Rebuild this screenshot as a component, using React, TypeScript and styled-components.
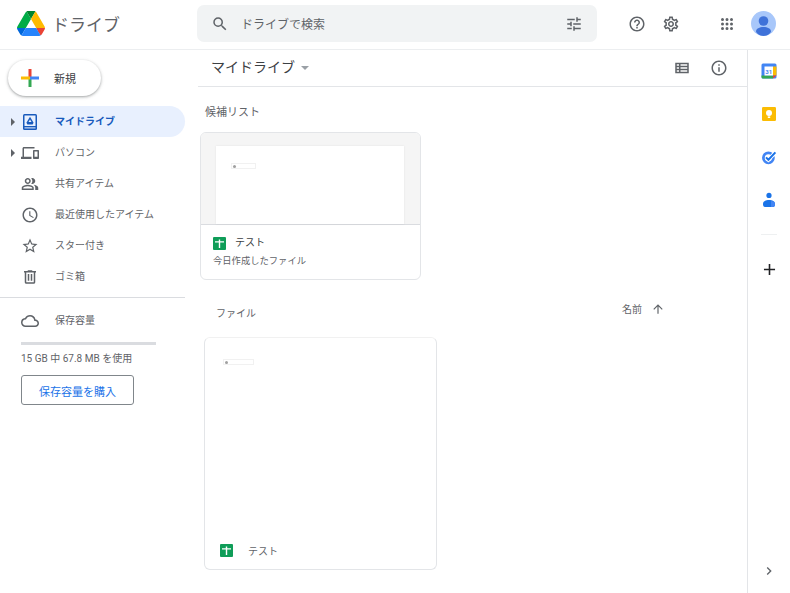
import { createGlobalStyle } from "styled-components";
import styled from "styled-components";

const GlobalStyle = createGlobalStyle`
  html, body { margin: 0; padding: 0; height: 100%; overflow: hidden; background: #fff; }
  body { font-family: Roboto, "Noto Sans CJK JP", sans-serif; color: #5f6368; }
  * { box-sizing: border-box; }
`;

const Page = styled.div`
  width: 790px;
  height: 593px;
  display: flex;
  flex-direction: column;
`;

const Header = styled.header`
  height: 50px;
  flex: none;
  display: flex;
  align-items: center;
  border-bottom: 1px solid #eceef0;
`;

const Brand = styled.div`
  width: 197px;
  flex: none;
  display: flex;
  align-items: center;
  gap: 7px;
  padding: 0 0 2px 17px;
  font-size: 17px;
  color: #5f6368;
`;

const SearchBox = styled.div`
  width: 400px;
  height: 37px;
  margin-bottom: 2px;
  flex: none;
  display: flex;
  align-items: center;
  padding: 0 14px 0 14px;
  background: #f1f3f4;
  border-radius: 7px;
  font-size: 12px;
  color: #5f6368;
`;

const SearchText = styled.span`
  flex: 1;
  margin-left: 12px;
`;

const HeaderActions = styled.div`
  display: flex;
  align-items: center;
  margin-left: 31px;
  margin-bottom: 2px;
`;

const HeaderIcon = styled.div<{ $gap?: number }>`
  width: 18px;
  height: 18px;
  display: flex;
  margin-right: ${(p) => p.$gap ?? 0}px;
`;

const Body = styled.div`
  flex: 1;
  display: flex;
  min-height: 0;
`;

const Sidebar = styled.aside`
  width: 197px;
  flex: none;
`;

const NewButton = styled.div`
  width: 93px;
  height: 36px;
  margin: 10px 0 10px 8px;
  display: flex;
  align-items: center;
  gap: 14px;
  padding-left: 12px;
  background: #fff;
  border-radius: 18px;
  box-shadow: 0 1px 2px rgba(60, 64, 67, 0.3), 0 1px 3px 1px rgba(60, 64, 67, 0.15);
  font-size: 11px;
  color: #3c4043;
`;

const NavRow = styled.div<{ $active?: boolean }>`
  width: 185px;
  height: 31px;
  display: flex;
  align-items: center;
  border-radius: 0 16px 16px 0;
  background: ${(p) => (p.$active ? "#e8f0fe" : "transparent")};
  color: ${(p) => (p.$active ? "#185abc" : "#5f6368")};
  font-size: 10px;
  font-weight: ${(p) => (p.$active ? 700 : 400)};
`;

const NavLabel = styled.span`
  margin-bottom: 2px;
`;

const Caret = styled.div<{ $visible?: boolean }>`
  width: 21px;
  flex: none;
  padding-left: 11px;
  &::before {
    content: "";
    display: ${(p) => (p.$visible ? "block" : "none")};
    width: 0;
    height: 0;
    border-left: 4px solid #5f6368;
    border-top: 4px solid transparent;
    border-bottom: 4px solid transparent;
  }
`;

const NavIcon = styled.div`
  width: 18px;
  height: 18px;
  flex: none;
  display: flex;
  margin-right: 16px;
`;

const Divider = styled.div`
  width: 185px;
  height: 1px;
  margin-top: 5px;
  background: #dadce0;
`;

const StorageRow = styled(NavRow)`
  margin-top: 7px;
`;

const StorageBar = styled.div`
  width: 135px;
  height: 3px;
  margin: 6px 0 0 21px;
  background: #dadce0;
`;

const StorageText = styled.div`
  margin: 7px 0 0 21px;
  font-size: 10px;
  line-height: 14px;
  color: #5f6368;
`;

const BuyButton = styled.div`
  width: 113px;
  height: 30px;
  margin: 9px 0 0 21px;
  padding-top: 1px;
  display: flex;
  align-items: center;
  justify-content: center;
  border: 1px solid #80868b;
  border-radius: 3px;
  font-size: 11px;
  color: #1a73e8;
`;

const Main = styled.main`
  flex: 1;
  min-width: 0;
`;

const Toolbar = styled.div`
  height: 37px;
  display: flex;
  align-items: center;
  margin-left: 1px;
  padding: 0 19px 0 13px;
  border-bottom: 1px solid #e3e5e8;
`;

const Title = styled.div`
  font-size: 14px;
  color: #3c4043;
  flex: 1;
  display: flex;
  align-items: center;
  gap: 6px;
  padding-bottom: 5px;
`;

const TitleCaret = styled.span`
  width: 0;
  height: 0;
  margin-top: 5px;
  border-top: 4px solid #9aa0a6;
  border-left: 4.5px solid transparent;
  border-right: 4.5px solid transparent;
`;

const ToolIcon = styled.div<{ $gap?: number }>`
  width: 18px;
  height: 18px;
  display: flex;
  margin-left: ${(p) => p.$gap ?? 0}px;
`;

const Section = styled.div`
  padding: 18px 0 0 8px;
  font-size: 11px;
  line-height: 16px;
  color: #5f6368;
`;

const SuggestedCard = styled.div`
  width: 221px;
  height: 148px;
  margin: 11px 0 0 3px;
  border: 1px solid #e3e5e8;
  border-radius: 6px;
  overflow: hidden;
`;

const Preview = styled.div`
  height: 92px;
  padding: 13px 16px 0 15px;
  background: #f5f5f5;
  border-bottom: 1px solid #dadce0;
`;

const SheetPage = styled.div`
  height: 78px;
  background: #fff;
  padding: 17px 0 0 15px;
  box-shadow: 0 0 2px rgba(0, 0, 0, 0.08);
`;

const CellMark = styled.div<{ $w: number }>`
  width: ${(p) => p.$w}px;
  height: 6px;
  border: 1px solid #f1f1f1;
  display: flex;
  align-items: center;
  padding-left: 1px;
  &::before {
    content: "";
    width: 3px;
    height: 3px;
    border-radius: 50%;
    background: #a0a0a0;
  }
`;

const CardInfo = styled.div`
  padding: 11px 0 0 12px;
`;

const NameRow = styled.div`
  display: flex;
  align-items: center;
  gap: 9px;
  font-size: 10px;
  line-height: 14px;
  color: #3c4043;
`;

const SheetBadge = styled.div`
  width: 13px;
  height: 13px;
  flex: none;
  display: flex;
  border-radius: 1px;
`;

const CardNote = styled.div`
  margin-top: 4px;
  font-size: 9.3px;
  line-height: 14px;
  color: #5f6368;
`;

const FilesHeader = styled.div`
  height: 57px;
  padding: 24px 0 0 19px;
  display: flex;
  font-size: 10px;
  line-height: 16px;
  color: #5f6368;
`;

const FilesLabel = styled.div`
  width: 406px;
  padding-top: 2px;
`;

const SortName = styled.div`
  display: flex;
  align-items: flex-start;
  gap: 9px;
  margin-top: -2px;
`;

const FileCard = styled.div`
  width: 233px;
  height: 233px;
  margin-left: 7px;
  display: flex;
  flex-direction: column;
  border: 1px solid #e3e5e8;
  border-top-color: #f1f1f1;
  border-radius: 6px;
`;

const FilePreview = styled.div`
  flex: 1;
  padding: 21px 0 0 18px;
`;

const FileName = styled.div`
  height: 38px;
  padding: 0 0 0 15px;
  display: flex;
  align-items: center;
  gap: 15px;
  font-size: 10px;
  color: #5f6368;
`;

const Rail = styled.aside`
  width: 43px;
  flex: none;
  display: flex;
  flex-direction: column;
  align-items: center;
  border-left: 1px solid #e3e5e8;
  padding: 13px 0 14px;
`;

const RailIcon = styled.div<{ $gap: number }>`
  width: 16px;
  height: 16px;
  display: flex;
  justify-content: center;
  align-items: center;
  margin-bottom: ${(p) => p.$gap}px;
`;

const RailDivider = styled.div`
  width: 16px;
  height: 1px;
  background: #eef0f1;
  margin-bottom: 26px;
`;

const RailSpacer = styled.div`
  flex: 1;
`;

const DriveLogo = () => (
  <svg width="28" height="25" viewBox="0 0 87.3 78">
    <path d="m6.6 66.85 3.85 6.65c.8 1.4 1.95 2.5 3.3 3.3l13.75-23.8h-27.5c0 1.55.4 3.1 1.2 4.5z" fill="#0066da" />
    <path d="m43.65 25-13.75-23.8c-1.35.8-2.5 1.9-3.3 3.3l-25.4 44a9.06 9.06 0 0 0 -1.2 4.5h27.5z" fill="#00ac47" />
    <path d="m73.55 76.8c1.35-.8 2.5-1.9 3.3-3.3l1.6-2.75 7.65-13.25c.8-1.4 1.2-2.95 1.2-4.5h-27.502l5.852 11.5z" fill="#ea4335" />
    <path d="m43.65 25 13.75-23.8c-1.35-.8-2.9-1.2-4.5-1.2h-18.5c-1.6 0-3.15.45-4.5 1.2z" fill="#00832d" />
    <path d="m59.8 53h-32.3l-13.75 23.8c1.35.8 2.9 1.2 4.5 1.2h50.8c1.6 0 3.15-.45 4.5-1.2z" fill="#2684fc" />
    <path d="m73.4 26.5-12.7-22c-.8-1.4-1.95-2.5-3.3-3.3l-13.75 23.8 16.15 28h27.45c0-1.55-.4-3.1-1.2-4.5z" fill="#ffba00" />
  </svg>
);

const Glyph = ({ d, size = 18, color = "#5f6368" }: { d: string; size?: number; color?: string }) => (
  <svg width={size} height={size} viewBox="0 0 24 24" fill={color} style={{ flex: "none" }}>
    <path d={d} />
  </svg>
);

const ICONS = {
  search: "M15.5 14h-.79l-.28-.27A6.47 6.47 0 0 0 16 9.5 6.5 6.5 0 1 0 9.5 16c1.61 0 3.09-.59 4.23-1.57l.27.28v.79l5 4.99L20.49 19l-4.99-5zm-6 0C7.01 14 5 11.99 5 9.5S7.01 5 9.5 5 14 7.01 14 9.5 11.99 14 9.5 14z",
  tune: "M3 17v2h6v-2H3zM3 5v2h10V5H3zm10 16v-2h8v-2h-8v-2h-2v6h2zM7 9v2H3v2h4v2h2V9H7zm14 4v-2H11v2h10zm-6-4h2V7h4V5h-4V3h-2v6z",
  help: "M11 18h2v-2h-2v2zm1-16C6.48 2 2 6.48 2 12s4.48 10 10 10 10-4.48 10-10S17.52 2 12 2zm0 18c-4.41 0-8-3.59-8-8s3.59-8 8-8 8 3.59 8 8-3.59 8-8 8zm0-14c-2.21 0-4 1.79-4 4h2c0-1.1.9-2 2-2s2 .9 2 2c0 2-3 1.75-3 5h2c0-2.25 3-2.5 3-5 0-2.21-1.79-4-4-4z",
  gear: "M19.43 12.98c.04-.32.07-.64.07-.98s-.03-.66-.07-.98l2.11-1.65c.19-.15.24-.42.12-.64l-2-3.46c-.12-.22-.39-.3-.61-.22l-2.49 1c-.52-.4-1.08-.73-1.69-.98l-.38-2.65A.488.488 0 0 0 14 2h-4c-.25 0-.46.18-.49.42l-.38 2.65c-.61.25-1.17.59-1.69.98l-2.49-1c-.23-.09-.49 0-.61.22l-2 3.46c-.13.22-.07.49.12.64l2.11 1.65c-.04.32-.07.65-.07.98s.03.66.07.98l-2.11 1.65c-.19.15-.24.42-.12.64l2 3.46c.12.22.39.3.61.22l2.49-1c.52.4 1.08.73 1.69.98l.38 2.65c.03.24.24.42.49.42h4c.25 0 .46-.18.49-.42l.38-2.65c.61-.25 1.17-.59 1.69-.98l2.49 1c.23.09.49 0 .61-.22l2-3.46c.12-.22.07-.49-.12-.64l-2.11-1.65zM17.45 11.27c.04.31.05.52.05.73s-.02.43-.05.73l-.14 1.13.89.7 1.08.84-.7 1.21-1.27-.51-1.04-.42-.9.68c-.43.32-.84.56-1.25.73l-1.06.43-.16 1.13-.2 1.35h-1.4l-.19-1.35-.16-1.13-1.06-.43c-.43-.18-.83-.41-1.23-.71l-.91-.7-1.06.43-1.27.51-.7-1.21 1.08-.84.89-.7-.14-1.13c-.03-.31-.05-.54-.05-.74s.02-.43.05-.73l.14-1.13-.89-.7-1.08-.84.7-1.21 1.27.51 1.04.42.9-.68c.43-.32.84-.56 1.25-.73l1.06-.43.16-1.13.2-1.35h1.39l.19 1.35.16 1.13 1.06.43c.43.18.83.41 1.23.71l.91.7 1.06-.43 1.27-.51.7 1.21-1.07.85-.89.7.14 1.13zM12 8c-2.21 0-4 1.79-4 4s1.79 4 4 4 4-1.79 4-4-1.79-4-4-4zm0 6c-1.1 0-2-.9-2-2s.9-2 2-2 2 .9 2 2-.9 2-2 2z",
  apps: "M6 8a2 2 0 1 0 0-4 2 2 0 0 0 0 4zm6 12a2 2 0 1 0 0-4 2 2 0 0 0 0 4zm-6 0a2 2 0 1 0 0-4 2 2 0 0 0 0 4zm0-6a2 2 0 1 0 0-4 2 2 0 0 0 0 4zm6 0a2 2 0 1 0 0-4 2 2 0 0 0 0 4zm6-10a2 2 0 1 0 0 4 2 2 0 0 0 0-4zm-6 4a2 2 0 1 0 0-4 2 2 0 0 0 0 4zm6 6a2 2 0 1 0 0-4 2 2 0 0 0 0 4zm0 6a2 2 0 1 0 0-4 2 2 0 0 0 0 4z",
  list: "M3 5v14h18V5H3zm2 2h3v2H5V7zm0 4h3v2H5v-2zm0 6v-2h3v2H5zm14 0h-9v-2h9v2zm0-4h-9v-2h9v2zm0-4h-9V7h9v2z",
  info: "M11 7h2v2h-2V7zm0 4h2v6h-2v-6zm1-9C6.48 2 2 6.48 2 12s4.48 10 10 10 10-4.48 10-10S17.52 2 12 2zm0 18c-4.41 0-8-3.59-8-8s3.59-8 8-8 8 3.59 8 8-3.59 8-8 8z",
  computer: "M4 6h14V4H4c-1.1 0-2 .9-2 2v11H0v3h14v-3H4V6zm19 2h-6c-.55 0-1 .45-1 1v10c0 .55.45 1 1 1h6c.55 0 1-.45 1-1V9c0-.55-.45-1-1-1zm-1 9h-4v-7h4v7z",
  people: "M16.67 13.13C18.04 14.06 19 15.32 19 17v3h4v-3c0-2.18-3.57-3.47-6.33-3.87zM15 12c2.21 0 4-1.79 4-4s-1.79-4-4-4c-.47 0-.91.1-1.33.24a5.98 5.98 0 0 1 0 7.52c.42.14.86.24 1.33.24zM9 12c2.21 0 4-1.79 4-4s-1.79-4-4-4-4 1.79-4 4 1.79 4 4 4zm0-6c1.1 0 2 .9 2 2s-.9 2-2 2-2-.9-2-2 .9-2 2-2zM9 13c-2.67 0-8 1.34-8 4v3h16v-3c0-2.66-5.33-4-8-4zm6 5H3v-.99C3.2 16.29 6.3 15 9 15s5.8 1.29 6 2v1z",
  clock: "M11.99 2C6.47 2 2 6.48 2 12s4.47 10 9.99 10C17.52 22 22 17.52 22 12S17.52 2 11.99 2zM12 20c-4.42 0-8-3.58-8-8s3.58-8 8-8 8 3.58 8 8-3.58 8-8 8zm.5-13H11v6l5.25 3.15.75-1.23-4.5-2.67V7z",
  star: "M22 9.24l-7.19-.62L12 2 9.19 8.63 2 9.24l5.46 4.73L5.82 21 12 17.27 18.18 21l-1.63-7.03L22 9.24zM12 15.4l-3.76 2.27 1-4.28-3.32-2.88 4.38-.38L12 6.1l1.71 4.04 4.38.38-3.32 2.88 1 4.28L12 15.4z",
  trash: "M15 4V3H9v1H4v2h1v13c0 1.1.9 2 2 2h10c1.1 0 2-.9 2-2V6h1V4h-5zm2 15H7V6h10v13zM9 8h2v9H9V8zm4 0h2v9h-2V8z",
  cloud: "M19.35 10.04A7.49 7.49 0 0 0 12 4C9.11 4 6.6 5.64 5.35 8.04A5.994 5.994 0 0 0 0 14c0 3.31 2.69 6 6 6h13c2.76 0 5-2.24 5-5 0-2.64-2.05-4.78-4.65-4.96zM19 18H6c-2.21 0-4-1.79-4-4 0-2.05 1.53-3.76 3.56-3.97l1.07-.11.5-.95A5.469 5.469 0 0 1 12 6c2.62 0 4.88 1.86 5.39 4.43l.3 1.5 1.53.11A2.98 2.98 0 0 1 22 15c0 1.65-1.35 3-3 3z",
  up: "M4 12l1.41 1.41L11 7.83V20h2V7.83l5.58 5.59L20 12l-8-8-8 8z",
  plus: "M19 13h-6v6h-2v-6H5v-2h6V5h2v6h6v2z",
  chevron: "M10 6L8.59 7.41 13.17 12l-4.58 4.59L10 18l6-6z",
};

const MyDriveIcon = () => (
  <svg width="18" height="18" viewBox="0 0 18 18">
    <rect x="2" y="1" width="14" height="16" rx="1.5" fill="#185abc" />
    <rect x="3.5" y="2.5" width="11" height="10.5" fill="#e8f0fe" />
    <path d="M9 3.8l3.6 5.9-1 1.8H6.4l-1-1.8z" fill="#185abc" />
    <path d="M9 6.4l1.5 2.7h-3z" fill="#e8f0fe" />
    <rect x="3.5" y="14.4" width="11" height="1" fill="#e8f0fe" />
  </svg>
);

const PlusLogo = () => (
  <svg width="20" height="20" viewBox="0 0 20 20">
    <rect x="8.5" y="1" width="3" height="9" fill="#ea4335" />
    <rect x="8.5" y="10" width="3" height="9" fill="#34a853" />
    <rect x="1" y="8.5" width="9" height="3" fill="#fbbc04" />
    <rect x="10" y="8.5" width="9" height="3" fill="#4285f4" />
  </svg>
);

const Avatar = () => (
  <svg width="25" height="25" viewBox="0 0 25 25">
    <circle cx="12.5" cy="12.5" r="12.5" fill="#a8c7fa" />
    <circle cx="12.5" cy="10" r="4.8" fill="#3f72d9" />
    <path d="M5 20.5c0-3 3.5-4.5 7.5-4.5s7.5 1.5 7.5 4.5c0 1.5-3.5 4.5-7.5 4.5S5 22 5 20.5z" fill="#3f72d9" />
  </svg>
);

const SheetIcon = () => (
  <svg width="13" height="13" viewBox="0 0 13 13">
    <rect width="13" height="13" rx="1" fill="#0f9d58" />
    <path d="M2 4.2h3.8V2.6h1.4v1.6H11v1.4H7.2v5.4H5.8V5.6H2z" fill="#fff" />
  </svg>
);

const CalendarIcon = () => (
  <svg width="16" height="16" viewBox="0 0 16 16">
    <rect x="0.5" y="0.5" width="15" height="15" rx="1.5" fill="#4285f4" />
    <rect x="12" y="3.5" width="3.5" height="9" fill="#fbbc04" />
    <path d="M0.5 12.5H12v3H2A1.5 1.5 0 0 1 .5 14z" fill="#34a853" />
    <path d="M12 12.5h3.5L12 15.5z" fill="#ea4335" />
    <rect x="3.5" y="3.5" width="8.5" height="9" fill="#fff" />
    <text x="7.7" y="10.6" fontSize="6" fontFamily="Roboto, sans-serif" fontWeight="700" textAnchor="middle" fill="#4285f4">31</text>
  </svg>
);

const KeepIcon = () => (
  <svg width="16" height="16" viewBox="0 0 16 16">
    <rect x="1" y="1" width="14" height="14" rx="1.2" fill="#fbbc04" />
    <circle cx="8" cy="7" r="3" fill="#fff" />
    <rect x="6.8" y="10.4" width="2.4" height="1.6" fill="#fff" />
  </svg>
);

const TasksIcon = () => (
  <svg width="16" height="16" viewBox="0 0 16 16" fill="none">
    <circle cx="7.4" cy="8.8" r="5" stroke="#4285f4" strokeWidth="2.8" />
    <path d="M5 8.4l2.4 2.4L14.4 3.4" stroke="#fff" strokeWidth="3.8" />
    <path d="M5 8.4l2.4 2.4L14.4 3.4" stroke="#1a73e8" strokeWidth="2" />
  </svg>
);

const ContactsIcon = () => (
  <svg width="16" height="16" viewBox="0 0 16 16">
    <circle cx="8" cy="3.4" r="2.6" fill="#1a73e8" />
    <path d="M2 12c0-3 2.8-4 6-4s6 1 6 4c0 2-.6 3-2 3H4c-1.4 0-2-1-2-3z" fill="#1a73e8" />
    <path d="M10 9c2 .2 4 1 4 3 0 2-.6 3-2 3h-2z" fill="#4285f4" />
  </svg>
);

const NAV_ITEMS = [
  { label: "パソコン", icon: ICONS.computer, caret: true },
  { label: "共有アイテム", icon: ICONS.people },
  { label: "最近使用したアイテム", icon: ICONS.clock },
  { label: "スター付き", icon: ICONS.star },
  { label: "ゴミ箱", icon: ICONS.trash },
];

export default function App() {
  return (
    <Page>
      <GlobalStyle />
      <Header>
        <Brand>
          <DriveLogo />
          <span>ドライブ</span>
        </Brand>
        <SearchBox>
          <Glyph d={ICONS.search} />
          <SearchText>ドライブで検索</SearchText>
          <Glyph d={ICONS.tune} />
        </SearchBox>
        <HeaderActions>
          <HeaderIcon $gap={16}><Glyph d={ICONS.help} /></HeaderIcon>
          <HeaderIcon $gap={38}><Glyph d={ICONS.gear} /></HeaderIcon>
          <HeaderIcon $gap={15}><Glyph d={ICONS.apps} /></HeaderIcon>
          <Avatar />
        </HeaderActions>
      </Header>
      <Body>
        <Sidebar>
          <NewButton>
            <PlusLogo />
            <span>新規</span>
          </NewButton>
          <NavRow $active>
            <Caret $visible />
            <NavIcon><MyDriveIcon /></NavIcon>
            <NavLabel>マイドライブ</NavLabel>
          </NavRow>
          {NAV_ITEMS.map((item) => (
            <NavRow key={item.label}>
              <Caret $visible={item.caret} />
              <NavIcon><Glyph d={item.icon} /></NavIcon>
              <NavLabel>{item.label}</NavLabel>
            </NavRow>
          ))}
          <Divider />
          <StorageRow>
            <Caret />
            <NavIcon><Glyph d={ICONS.cloud} /></NavIcon>
            <NavLabel>保存容量</NavLabel>
          </StorageRow>
          <StorageBar />
          <StorageText>15 GB 中 67.8 MB を使用</StorageText>
          <BuyButton>保存容量を購入</BuyButton>
        </Sidebar>
        <Main>
          <Toolbar>
            <Title>
              マイドライブ
              <TitleCaret />
            </Title>
            <ToolIcon><Glyph d={ICONS.list} /></ToolIcon>
            <ToolIcon $gap={19}><Glyph d={ICONS.info} /></ToolIcon>
          </Toolbar>
          <Section>候補リスト</Section>
          <SuggestedCard>
            <Preview>
              <SheetPage>
                <CellMark $w={25} />
              </SheetPage>
            </Preview>
            <CardInfo>
              <NameRow>
                <SheetBadge><SheetIcon /></SheetBadge>
                <span>テスト</span>
              </NameRow>
              <CardNote>今日作成したファイル</CardNote>
            </CardInfo>
          </SuggestedCard>
          <FilesHeader>
            <FilesLabel>ファイル</FilesLabel>
            <SortName>
              <span>名前</span>
              <Glyph d={ICONS.up} size={14} />
            </SortName>
          </FilesHeader>
          <FileCard>
            <FilePreview>
              <CellMark $w={31} />
            </FilePreview>
            <FileName>
              <SheetBadge><SheetIcon /></SheetBadge>
              <span>テスト</span>
            </FileName>
          </FileCard>
        </Main>
        <Rail>
          <RailIcon $gap={27}><CalendarIcon /></RailIcon>
          <RailIcon $gap={27}><KeepIcon /></RailIcon>
          <RailIcon $gap={27}><TasksIcon /></RailIcon>
          <RailIcon $gap={26}><ContactsIcon /></RailIcon>
          <RailDivider />
          <RailIcon $gap={0}><Glyph d={ICONS.plus} size={19} color="#202124" /></RailIcon>
          <RailSpacer />
          <RailIcon $gap={0}><Glyph d={ICONS.chevron} size={16} /></RailIcon>
        </Rail>
      </Body>
    </Page>
  );
}
